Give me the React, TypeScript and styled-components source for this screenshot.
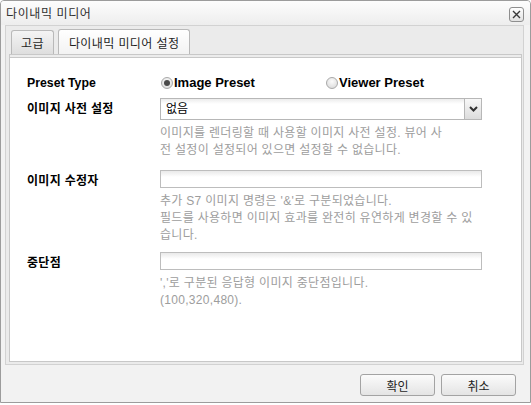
import styled, { createGlobalStyle } from "styled-components";

const GlobalStyle = createGlobalStyle`
  html, body { margin: 0; padding: 0; background: #ffffff; }
  body {
    font-family: "Liberation Sans", "Noto Sans CJK KR", sans-serif;
    font-size: 12px;
    color: #000;
  }
  * { box-sizing: border-box; }
`;

const Dialog = styled.div`
  width: 531px;
  height: 403px;
  display: flex;
  flex-direction: column;
  border: 1px solid #9c9c9c;
  border-radius: 4px 4px 0 0;
  background: #f2f2f2;
`;

const TitleBar = styled.div`
  height: 24px;
  display: flex;
  align-items: center;
  justify-content: space-between;
  padding: 0 5px 0 5px;
  background: linear-gradient(to bottom, #fdfdfd, #ededed);
  border-radius: 3px 3px 0 0;
`;

const Title = styled.span`
  font-size: 12px;
  letter-spacing: 0.6px;
  color: #303030;
  line-height: 16px;
  padding-top: 2px;
`;

const CloseButton = styled.button`
  all: unset;
  width: 15px;
  height: 15px;
  margin: 2px 1px 0 0;
  display: flex;
  align-items: center;
  justify-content: center;
  border: 1px solid #8e8e8e;
  border-radius: 3px;
  background: linear-gradient(to bottom, #ffffff, #e2e2e2);
  box-sizing: border-box;
`;

const TabFrame = styled.div`
  height: 340px;
  margin: 0 6px 0 4px;
  padding: 3px 1px 2px 3px;
  display: flex;
  flex-direction: column;
  border: 1px solid #d2d2d2;
  background: #ebebeb;
`;

const TabStrip = styled.div`
  display: flex;
  align-items: flex-end;
  gap: 4px;
  padding-left: 2px;
  height: 25px;
`;

const Tab = styled.div<{ $active?: boolean }>`
  height: ${(p) => (p.$active ? "25px" : "24px")};
  padding: 0 ${(p) => (p.$active ? "10px" : "9px")};
  display: flex;
  align-items: center;
  border: 1px solid #b9b9b9;
  border-bottom: 0;
  border-radius: 3px 3px 0 0;
  font-size: 12px;
  letter-spacing: 0.4px;
  color: #1e1e1e;
  background: ${(p) =>
    p.$active
      ? "linear-gradient(to bottom, #ffffff, #f3f3f3)"
      : "linear-gradient(to bottom, #f4f4f4, #dedede)"};
`;

const TabSpacer = styled.div`
  height: 3px;
  border: 1px solid #c8c8c8;
  border-bottom: 0;
  background: #ececec;
`;

const Panel = styled.div`
  flex: 1;
  border: 1px solid #c8c8c8;
  background: #ffffff;
  padding: 14px 0 0 17px;
`;

const Row = styled.div<{ $space: number }>`
  display: grid;
  grid-template-columns: 133px 322px;
  align-items: start;
  margin-bottom: ${(p) => p.$space}px;
`;

const Label = styled.div<{ $latin?: boolean }>`
  padding-top: 3px;
  line-height: 16px;
  font-size: ${(p) => (p.$latin ? "12.3px" : "12px")};
  letter-spacing: ${(p) => (p.$latin ? "0" : "0.3px")};
  font-weight: bold;
  color: #000;
`;

const Field = styled.div`
  display: flex;
  flex-direction: column;
`;

const RadioGroup = styled.div`
  height: 21px;
  display: grid;
  grid-template-columns: 165px 160px;
  align-items: center;
  padding-left: 1px;
`;

const RadioItem = styled.label`
  display: flex;
  align-items: center;
  gap: 1px;
  font-size: 13px;
  font-weight: bold;
  color: #000;
`;

const RadioDot = styled.span<{ $checked?: boolean }>`
  width: 12px;
  height: 12px;
  border-radius: 50%;
  border: 1px solid #a9a9a9;
  background: radial-gradient(circle at 50% 35%, #fbfbfb, #d6d6d6);
  display: inline-flex;
  align-items: center;
  justify-content: center;

  &::after {
    content: "";
    width: 6px;
    height: 6px;
    border-radius: 50%;
    background: #4a4a4a;
    display: ${(p) => (p.$checked ? "block" : "none")};
  }
`;

const Select = styled.div`
  height: 22px;
  display: flex;
  border: 1px solid #b7b7b7;
  background: linear-gradient(to bottom, #ececec, #ffffff 5px);
`;

const SelectValue = styled.span`
  flex: 1;
  padding: 0 5px;
  line-height: 20px;
  font-size: 12px;
  color: #000;
`;

const SelectButton = styled.span`
  width: 17px;
  display: flex;
  align-items: center;
  justify-content: center;
  border-left: 1px solid #b7b7b7;
  background: linear-gradient(to bottom, #f8f8f8, #dcdcdc);
`;

const TextInput = styled.input`
  all: unset;
  display: block;
  height: 18px;
  border: 1px solid #bdbdbd;
  background: linear-gradient(to bottom, #e9e9e9, #ffffff 6px);
  box-sizing: border-box;
`;

const Help = styled.div`
  margin-top: 5px;
  font-size: 12px;
  line-height: 17px;
  letter-spacing: 0.3px;
  color: #9d9d9d;
`;

const Footer = styled.div`
  flex: 1;
  display: flex;
  justify-content: flex-end;
  align-items: flex-start;
  gap: 6px;
  padding: 9px 14px 0 0;
`;

const Button = styled.button`
  all: unset;
  width: 75px;
  height: 22px;
  display: flex;
  align-items: center;
  justify-content: center;
  border: 1px solid #a3a3a3;
  border-radius: 3px;
  background: linear-gradient(to bottom, #fbfbfb, #e4e4e4);
  font-family: "Liberation Sans", "Noto Sans CJK KR", sans-serif;
  font-size: 12px;
  color: #1e1e1e;
  box-sizing: border-box;
`;

export default function App() {
  return (
    <>
      <GlobalStyle />
      <Dialog>
        <TitleBar>
          <Title>다이내믹 미디어</Title>
          <CloseButton>
            <svg width="9" height="9" viewBox="0 0 9 9">
              <path d="M1 1 L8 8 M8 1 L1 8" stroke="#3a3a3a" strokeWidth="1.4" />
            </svg>
          </CloseButton>
        </TitleBar>

        <TabFrame>
          <TabStrip>
            <Tab>고급</Tab>
            <Tab $active>다이내믹 미디어 설정</Tab>
          </TabStrip>
          <TabSpacer />
          <Panel>
            <Row $space={5}>
              <Label $latin>Preset Type</Label>
              <RadioGroup>
                <RadioItem>
                  <RadioDot $checked />
                  Image Preset
                </RadioItem>
                <RadioItem>
                  <RadioDot />
                  Viewer Preset
                </RadioItem>
              </RadioGroup>
            </Row>

            <Row $space={11}>
              <Label>이미지 사전 설정</Label>
              <Field>
                <Select>
                  <SelectValue>없음</SelectValue>
                  <SelectButton>
                    <svg width="9" height="6" viewBox="0 0 9 6">
                      <path d="M1 1 L4.5 4.5 L8 1" stroke="#333" strokeWidth="2" fill="none" />
                    </svg>
                  </SelectButton>
                </Select>
                <Help>
                  이미지를 렌더링할 때 사용할 이미지 사전 설정. 뷰어 사<br />
                  전 설정이 설정되어 있으면 설정할 수 없습니다.
                </Help>
              </Field>
            </Row>

            <Row $space={8}>
              <Label>이미지 수정자</Label>
              <Field>
                <TextInput />
                <Help>
                  추가 S7 이미지 명령은 '&amp;'로 구분되었습니다.<br />
                  필드를 사용하면 이미지 효과를 완전히 유연하게 변경할 수 있<br />
                  습니다.
                </Help>
              </Field>
            </Row>

            <Row $space={0}>
              <Label>중단점</Label>
              <Field>
                <TextInput />
                <Help>
                  ','로 구분된 응답형 이미지 중단점입니다.<br />
                  (100,320,480).
                </Help>
              </Field>
            </Row>
          </Panel>
        </TabFrame>

        <Footer>
          <Button>확인</Button>
          <Button>취소</Button>
        </Footer>
      </Dialog>
    </>
  );
}
